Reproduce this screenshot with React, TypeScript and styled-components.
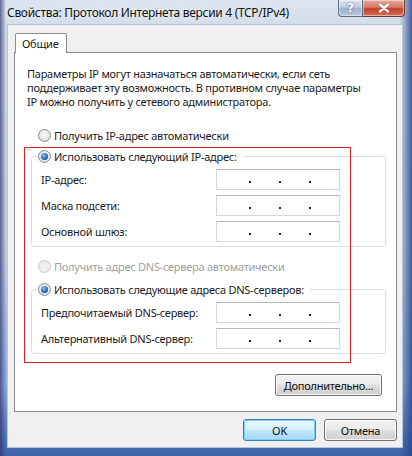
import React, { FunctionComponent } from 'react'
import styled, { createGlobalStyle } from 'styled-components'

const GlobalStyle = createGlobalStyle`
	html, body {
		margin: 0;
		padding: 0;
		background: #ffffff;
	}
	* {
		box-sizing: border-box;
	}
`

const UI_FONT = `'Noto Sans', 'Open Sans', sans-serif`

const Window = styled.div`
	width: 412px;
	height: 456px;
	overflow: hidden;
	display: flex;
	flex-direction: column;
	padding: 0 9px 8px 7px;
	font-family: ${UI_FONT};
	font-size: 11px;
	letter-spacing: -0.25px;
	color: #1b1b1b;
	background:
		linear-gradient(to right, rgba(40, 70, 140, 0) 97%, rgba(40, 70, 140, 0.85) 100%),
		linear-gradient(to right, rgba(45, 50, 110, 0.7) 0%, rgba(45, 50, 110, 0) 1.5%),
		linear-gradient(to bottom, #dbe5ef 0px, #d3deea 24px, #c3d3e6 55%, #8eaad6 85%, #3d62a8 100%);
`

const TitleBar = styled.div`
	height: 24px;
	display: flex;
	justify-content: space-between;
	align-items: flex-start;
	flex: none;
`

const TitleText = styled.div`
	padding: 4px 0 0 0;
	font-size: 12px;
	letter-spacing: -0.3px;
	color: #111;
	white-space: nowrap;
	text-shadow: 0 0 6px rgba(255, 255, 255, 0.9);
`

const CaptionButtons = styled.div`
	display: flex;
	margin-right: -2px;
`

const CaptionButton = styled.div<{ $close?: boolean }>`
	height: 17px;
	width: ${(p) => (p.$close ? 42 : 25)}px;
	display: flex;
	align-items: center;
	justify-content: center;
	border: 1px solid ${(p) => (p.$close ? '#6b3a35' : '#5d6b80')};
	border-top: none;
	border-radius: ${(p) => (p.$close ? '0 0 4px 0' : '0 0 0 4px')};
	border-left: ${(p) => (p.$close ? 'none' : '')};
	background: ${(p) =>
		p.$close
			? 'linear-gradient(to bottom, #e9a99a 0%, #d47a66 45%, #c2402a 55%, #d9705a 100%)'
			: 'linear-gradient(to bottom, #dbe4ef 0%, #bccbdf 45%, #9fb2cc 55%, #b8cae0 100%)'};
	box-shadow: inset 0 0 0 1px rgba(255, 255, 255, 0.45);
	color: #fff;
	font-family: 'DejaVu Sans', sans-serif;
	font-weight: bold;
	font-size: 12px;
	letter-spacing: 0;
	text-shadow: 0 0 2px rgba(0, 0, 0, 0.6);
`

const Client = styled.div`
	flex: 1;
	min-height: 0;
	display: flex;
	flex-direction: column;
	background: #f0f0f0;
	padding: 8px 5px 6px 6px;
	border: 1px solid #b7c4d4;
`

const TabStrip = styled.div`
	display: flex;
	padding-left: 1px;
	margin-bottom: -1px;
	position: relative;
	z-index: 1;
`

const Tab = styled.div`
	height: 20px;
	padding: 0 8px 0 6px;
	display: flex;
	align-items: center;
	background: #ffffff;
	border: 1px solid #898c95;
	border-bottom: none;
	border-radius: 2px 2px 0 0;
`

const Panel = styled.div`
	position: relative;
	flex: 1;
	background: #ffffff;
	border: 1px solid #898c95;
	padding: 14px 13px 11px 12px;
	display: flex;
	flex-direction: column;
`

const Description = styled.p`
	margin: 0;
	line-height: 14px;
	width: 340px;
`

const RadioRow = styled.label<{ $disabled?: boolean; $indent?: number }>`
	display: flex;
	align-items: center;
	gap: 3px;
	height: 16px;
	margin-left: ${(p) => p.$indent ?? 0}px;
	color: ${(p) => (p.$disabled ? '#a0a0a0' : '#1b1b1b')};
	white-space: nowrap;
`

const RadioMark = styled.span<{ $checked?: boolean; $disabled?: boolean }>`
	width: 13px;
	height: 13px;
	flex: none;
	border-radius: 50%;
	border: 1px solid ${(p) => (p.$disabled ? '#cacaca' : '#8a8b8c')};
	background: ${(p) =>
		p.$disabled
			? 'radial-gradient(circle at 50% 50%, #f4f4f4 0%, #e6e6e6 100%)'
			: 'radial-gradient(circle at 50% 40%, #f8f8f8 0%, #d8d8d8 100%)'};
	display: inline-flex;
	align-items: center;
	justify-content: center;

	&::after {
		content: '';
		display: ${(p) => (p.$checked ? 'block' : 'none')};
		width: 7px;
		height: 7px;
		border-radius: 50%;
		background: radial-gradient(circle at 40% 35%, #8cc6f2 0%, #2a6ab8 55%, #143f7e 100%);
	}
`

const Group = styled.fieldset<{ $top: number }>`
	margin: ${(p) => p.$top}px 0 0 4px;
	width: 355px;
	padding: 0 0 4px 6px;
	border: 1px solid #d5dfe5;
	border-radius: 3px;
	min-width: 0;
`

const GroupLegend = styled.legend`
	padding: 0 6px 0 0;
`

const FieldRow = styled.div`
	display: grid;
	grid-template-columns: 175px 124px;
	align-items: center;
	padding-left: 3px;
	margin-top: 5px;
`

const IpBox = styled.div`
	width: 124px;
	height: 21px;
	display: flex;
	align-items: center;
	padding-left: 4px;
	background: #ffffff;
	border: 1px solid #d4d7dc;
	border-top-color: #b2b5bb;
`

const IpSegment = styled.span`
	flex: 1;
`

const IpDot = styled.span`
	width: 2px;
	height: 2px;
	margin-top: 5px;
	background: #222;
`

const ActionRow = styled.div<{ $top: number }>`
	display: flex;
	justify-content: flex-end;
	gap: 8px;
	margin-top: ${(p) => p.$top}px;
`

const Button = styled.button<{ $width: number; $primary?: boolean }>`
	width: ${(p) => p.$width}px;
	height: 22px;
	padding: 0;
	font-family: ${UI_FONT};
	font-size: 11px;
	letter-spacing: -0.25px;
	color: #111;
	border-radius: 3px;
	border: 1px solid ${(p) => (p.$primary ? '#3c7fb1' : '#707070')};
	background: ${(p) =>
		p.$primary
			? 'linear-gradient(to bottom, #eaf6fd 0%, #d9f0fc 45%, #bee6fd 55%, #a7d9f5 100%)'
			: 'linear-gradient(to bottom, #f2f2f2 0%, #ebebeb 45%, #dddddd 55%, #cfcfcf 100%)'};
	box-shadow: inset 0 0 0 1px ${(p) => (p.$primary ? '#7fd2f7' : 'rgba(255,255,255,0.8)')};
`

// red annotation frame drawn over the manual settings area
const Highlight = styled.div`
	position: absolute;
	left: 9px;
	top: 94px;
	width: 327px;
	height: 216px;
	border: 1px solid #d8201e;
	pointer-events: none;
`

const CloseGlyph = () => (
	<svg width="12" height="10" viewBox="0 0 12 10">
		<path d="M2 1.5 L10 8.5 M10 1.5 L2 8.5" stroke="#4a1810" strokeWidth="3.4" strokeLinecap="round" opacity="0.35" />
		<path d="M2 1.5 L10 8.5 M10 1.5 L2 8.5" stroke="#ffffff" strokeWidth="2.4" strokeLinecap="round" />
	</svg>
)

const IpField: FunctionComponent = () => (
	<IpBox>
		<IpSegment />
		<IpDot />
		<IpSegment />
		<IpDot />
		<IpSegment />
		<IpDot />
		<IpSegment />
	</IpBox>
)

interface FieldProps {
	label: string
}

const Field: FunctionComponent<FieldProps> = ({ label }: FieldProps) => (
	<FieldRow>
		<span>{label}</span>
		<IpField />
	</FieldRow>
)

export default function App() {
	return (
		<>
			<GlobalStyle />
			<Window>
				<TitleBar>
					<TitleText>Свойства: Протокол Интернета версии 4 (TCP/IPv4)</TitleText>
					<CaptionButtons>
						<CaptionButton>?</CaptionButton>
						<CaptionButton $close>
							<CloseGlyph />
						</CaptionButton>
					</CaptionButtons>
				</TitleBar>
				<Client>
					<TabStrip>
						<Tab>Общие</Tab>
					</TabStrip>
					<Panel>
						<Description>
							Параметры IP могут назначаться автоматически, если сеть
							<br />
							поддерживает эту возможность. В противном случае параметры
							<br />
							IP можно получить у сетевого администратора.
						</Description>

						<RadioRow $indent={11} style={{ marginTop: 18 }}>
							<RadioMark />
							Получить IP-адрес автоматически
						</RadioRow>

						<Group $top={5}>
							<GroupLegend>
								<RadioRow>
									<RadioMark $checked />
									Использовать следующий IP-адрес:
								</RadioRow>
							</GroupLegend>
							<Field label="IP-адрес:" />
							<Field label="Маска подсети:" />
							<Field label="Основной шлюз:" />
						</Group>

						<RadioRow $indent={11} $disabled style={{ marginTop: 11 }}>
							<RadioMark $disabled />
							Получить адрес DNS-сервера автоматически
						</RadioRow>

						<Group $top={7}>
							<GroupLegend>
								<RadioRow>
									<RadioMark $checked />
									Использовать следующие адреса DNS-серверов:
								</RadioRow>
							</GroupLegend>
							<Field label="Предпочитаемый DNS-сервер:" />
							<Field label="Альтернативный DNS-сервер:" />
						</Group>

						<ActionRow $top={20} style={{ marginRight: 1 }}>
							<Button $width={107}>Дополнительно...</Button>
						</ActionRow>

						<Highlight />
					</Panel>
					<ActionRow $top={7}>
						<Button $width={73} $primary>
							OK
						</Button>
						<Button $width={73}>Отмена</Button>
					</ActionRow>
				</Client>
			</Window>
		</>
	)
}
